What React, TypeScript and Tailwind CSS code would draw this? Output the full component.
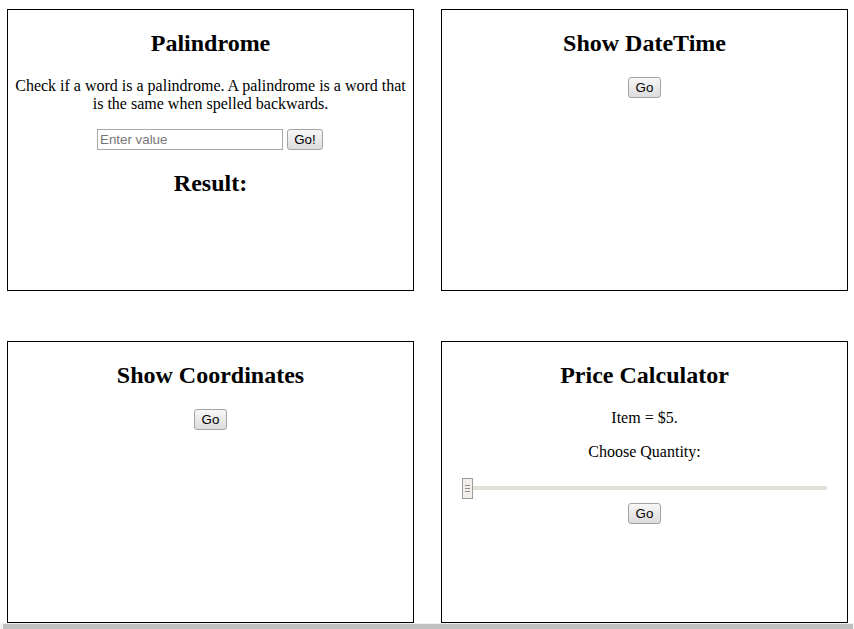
import React from "react";

type GoButtonProps = {
  label: string;
  width: string;
};

function GoButton({ label, width }: GoButtonProps) {
  return (
    <button
      type="button"
      className={`${width} h-[21px] shrink-0 rounded-[3px] border border-[#a3a3a3] bg-gradient-to-b from-[#f7f7f7] to-[#dcdcdc] p-0 text-[13.33px] leading-[19px] text-black [font-family:'Liberation_Sans',Arial,sans-serif]`}
    >
      {label}
    </button>
  );
}

function Panel({ children }: { children: React.ReactNode }) {
  return (
    <section className="flex h-[282px] flex-col items-center border border-black bg-white text-center">
      {children}
    </section>
  );
}

function Heading({ children, className = "" }: { children: React.ReactNode; className?: string }) {
  return (
    <h2 className={`text-[24px] font-bold leading-[normal] text-black ${className}`}>{children}</h2>
  );
}

function Slider() {
  return (
    <div className="relative mt-[17px] h-[21px] w-[365px]">
      <div className="mt-[8px] h-[4px] w-full bg-[#e2ded8]" />
      {/* thumb */}
      <div className="absolute left-0 top-0 flex h-[21px] w-[11px] flex-col items-center justify-center gap-[2px] border border-[#9f9b97] bg-[#f1efec]">
        <span className="block h-px w-[5px] bg-[#8f8c88]" />
        <span className="block h-px w-[5px] bg-[#8f8c88]" />
        <span className="block h-px w-[5px] bg-[#8f8c88]" />
      </div>
    </div>
  );
}

export default function App() {
  return (
    <div className="min-h-[629px] bg-white leading-[normal] text-black [font-family:'Liberation_Serif','Times_New_Roman',serif]">
      <div className="grid grid-cols-[407px_407px] gap-x-[27px] gap-y-[50px] pl-[7px] pt-[9px]">
        <Panel>
          <Heading className="mt-[20px]">Palindrome</Heading>
          <p className="mt-[20px] text-[16px]">
            Check if a word is a palindrome. A palindrome is a word that is the same when spelled backwards.
          </p>
          <div className="mt-[16px] mr-[1px] flex items-center gap-[4px]">
            <input
              type="text"
              placeholder="Enter value"
              className="h-[21px] w-[186px] border border-[#a9a9a9] bg-white px-[2px] text-[13.33px] text-black outline-none [font-family:'Liberation_Sans',Arial,sans-serif] placeholder:text-[#767676]"
            />
            <GoButton label="Go!" width="w-[36px]" />
          </div>
          <Heading className="mt-[20px]">Result:</Heading>
        </Panel>

        <Panel>
          <Heading className="mt-[20px]">Show DateTime</Heading>
          <div className="mt-[20px]">
            <GoButton label="Go" width="w-[33px]" />
          </div>
        </Panel>

        <Panel>
          <Heading className="mt-[20px]">Show Coordinates</Heading>
          <div className="mt-[20px]">
            <GoButton label="Go" width="w-[33px]" />
          </div>
        </Panel>

        <Panel>
          <Heading className="mt-[20px]">Price Calculator</Heading>
          <p className="mt-[20px] text-[16px]">Item = $5.</p>
          <p className="mt-[16px] text-[16px]">Choose Quantity:</p>
          <Slider />
          <div className="mt-[4px]">
            <GoButton label="Go" width="w-[33px]" />
          </div>
        </Panel>
      </div>

      {/* horizontal scrollbar strip */}
      <div className="h-[6px] bg-[#f0f0f0] pt-[1px]">
        <div className="ml-[3px] mr-[1px] h-[5px] bg-[#c1c1c1]" />
      </div>
    </div>
  );
}
